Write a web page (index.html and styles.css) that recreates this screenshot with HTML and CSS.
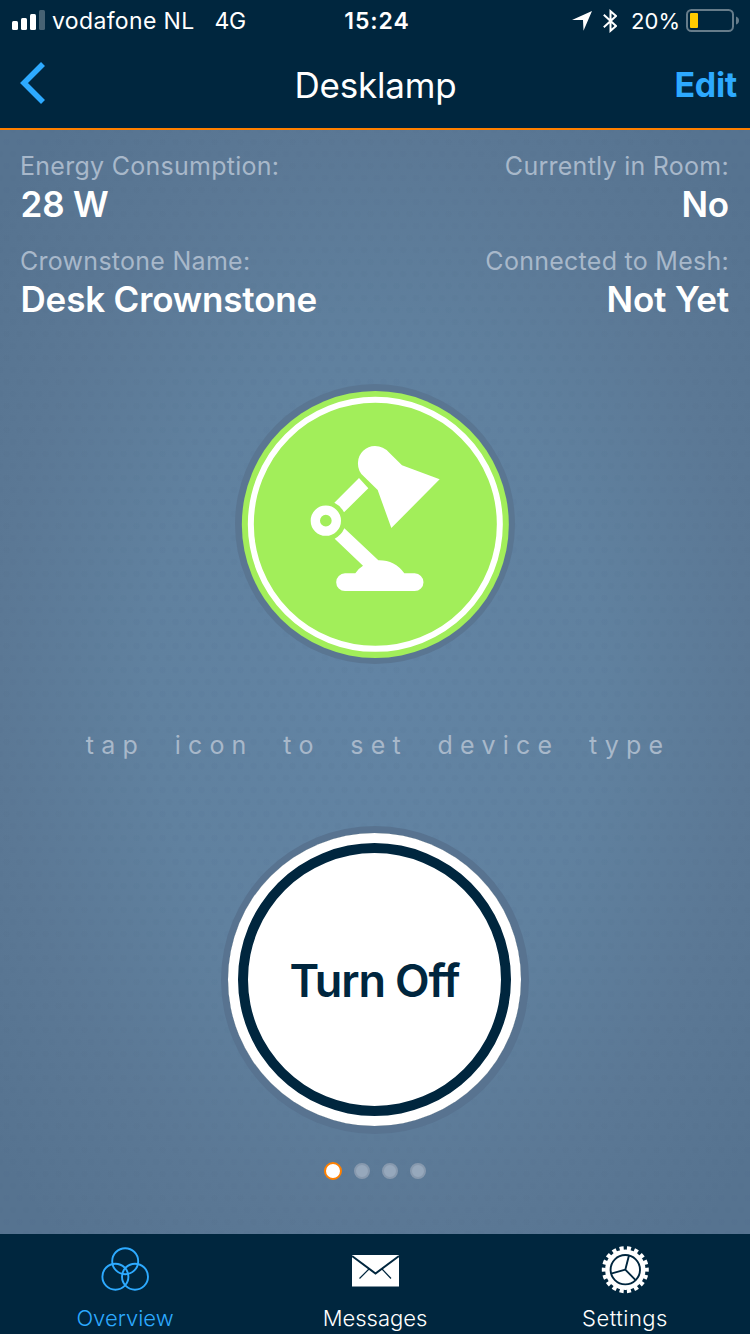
FILE: index.html
```html
<!DOCTYPE html>
<html lang="en">
<head>
<meta charset="utf-8">
<title>Desklamp</title>
<link rel="stylesheet" href="styles.css">
</head>
<body>
<div class="screen">
  <div class="status">
    <div class="status-left">
      <svg class="signal" width="34" height="22" viewBox="0 0 34 22"><g fill="#fff"><rect x="0" y="12" width="6" height="9" rx="1.5"/><rect x="9" y="9" width="6" height="12" rx="1.5"/><rect x="18" y="5" width="6" height="16" rx="1.5"/><rect x="27" y="1" width="6" height="20" rx="1.5" opacity=".28"/></g></svg>
      <span class="carrier">vodafone NL</span>
      <span class="network">4G</span>
    </div>
    <span class="clock">15:24</span>
    <div class="status-right">
      <svg class="location" width="20" height="20" viewBox="0 0 20 20"><path fill="#fff" d="M20 0 11.500 19.700 11 9H0Z"/></svg>
      <svg class="bluetooth" width="14" height="24" viewBox="0 0 14 24"><path fill="none" stroke="#fff" stroke-width="2" d="M.8 5.800 13 17 7.500 21.800V2.200L13 7 .8 18.200"/></svg>
      <span class="percent">20%</span>
      <svg class="battery" width="54" height="24" viewBox="0 0 54 24"><rect x="1" y="1" width="46" height="21" rx="4.500" fill="none" stroke="#667c8a" stroke-width="2"/><rect x="4" y="4" width="8" height="15" rx="1" fill="#fc0"/><path fill="#667c8a" d="M50 7.500q3 1 3 4t-3 4Z"/></svg>
    </div>
  </div>
  <header class="nav">
    <svg class="back" width="26" height="42" viewBox="0 0 26 42"><path fill="none" stroke="#2daaff" stroke-width="5.600" d="M23 2 4 21 23 40"/></svg>
    <h1 class="title">Desklamp</h1>
    <span class="edit">Edit</span>
  </header>
  <main class="content">
    <div class="info">
      <div class="item">
        <div class="label">Energy Consumption:</div>
        <div class="value">28 W</div>
      </div>
      <div class="item item-end">
        <div class="label">Currently in Room:</div>
        <div class="value">No</div>
      </div>
      <div class="item">
        <div class="label">Crownstone Name:</div>
        <div class="value">Desk Crownstone</div>
      </div>
      <div class="item item-end">
        <div class="label">Connected to Mesh:</div>
        <div class="value">Not Yet</div>
      </div>
    </div>
    <svg class="device" width="280" height="280" viewBox="15 27 840 840">
      <circle cx="435" cy="447" r="420" fill="#5a7692"/>
      <circle cx="436" cy="448.500" r="400.500" fill="#a2ee5a"/>
      <circle cx="436" cy="448" r="373.500" fill="none" stroke="#fff" stroke-width="18"/>
      <g fill="#fff">
        <path d="M478 233 516 271 629 313 484 459 443 345 401 304A52 52 0 0 1 384 262A51 51 0 0 1 435 213Q460 213 478 233Z"/>
        <path d="M387 309 415 340 342 412Q332 392 313 383Z"/>
        <path d="M343 460 445 556Q494 555 523 595H554A26.500 26.500 0 0 1 554 648H345A26.500 26.500 0 0 1 345 595H376Q384 581 399 572L314 491Q334 481 343 460Z"/>
      </g>
      <circle cx="287.500" cy="437" r="31.500" fill="none" stroke="#fff" stroke-width="28"/>
    </svg>
    <p class="hint">tap icon to set device type</p>
    <div class="switch-ring"><div class="switch"><span class="switch-text">Turn Off</span></div></div>
    <div class="pager"><i class="dot dot-active"></i><i class="dot"></i><i class="dot"></i><i class="dot"></i></div>
  </main>
  <nav class="tabs">
    <div class="tab tab-active">
      <svg width="50" height="50" viewBox="0 0 50 50"><g fill="none" stroke="#2daaff" stroke-width="1.900"><circle cx="25.200" cy="17.200" r="13"/><circle cx="15.400" cy="32.700" r="13"/><circle cx="35" cy="32.700" r="13"/></g></svg>
      <span class="tab-label label-overview">Overview</span>
    </div>
    <div class="tab">
      <svg width="50" height="50" viewBox="0 0 50 50"><path fill="#fff" d="M2 11h47v31.500H2Z"/><path fill="none" stroke="#00263e" stroke-width="2" d="M2 12 25.500 29.500 49 12"/><path fill="none" stroke="#00263e" stroke-width="1.200" d="M19 25 9.500 34.500M32 25 41 34.500"/></svg>
      <span class="tab-label label-messages">Messages</span>
    </div>
    <div class="tab">
      <svg width="50" height="50" viewBox="0 0 50 50"><circle cx="25.300" cy="25.700" r="20.200" fill="#fff"/><circle cx="25.300" cy="25.700" r="21.500" fill="none" stroke="#fff" stroke-width="4" pathLength="180" stroke-dasharray="5.500 4.500" stroke-dashoffset="2.750"/><g fill="none" stroke="#00263e" stroke-width="1.900"><circle cx="25.300" cy="25.700" r="14.700"/><path d="M25.300 25.700 28.900 11.700M25.300 25.700 11 29.700M25.300 25.700 35.600 36.200"/></g></svg>
      <span class="tab-label label-settings">Settings</span>
    </div>
  </nav>
</div>
</body>
</html>
```
FILE: styles.css
```css
* { box-sizing: border-box; }
body { margin: 0; font-family: Inter, "Liberation Sans", sans-serif; color: #fff; }
.screen { width: 750px; height: 1334px; display: flex; flex-direction: column; overflow: hidden; background: #00263e; white-space: nowrap; }
svg { display: block; flex: none; }

.status { height: 41px; padding: 1px 12px 0; display: grid; grid-template-columns: 1fr auto 1fr; align-items: center; line-height: 40px; font-size: 23px; }
.status-left, .status-right { display: flex; align-items: center; }
.status-right { justify-content: flex-end; margin-right: -12px; }
.signal { margin-top: -2px; }
.carrier { margin-left: 6px; letter-spacing: .35px; }
.network { margin-left: 20px; letter-spacing: -.3px; }
.clock { margin-left: 4px; font-weight: 600; letter-spacing: .9px; }
.location, .battery { margin-top: -1px; }
.bluetooth { margin: -1px 0 0 11px; }
.percent { margin: 0 6px 0 14px; font-size: 22px; }
.battery { margin-right: 10px; }

.nav { height: 89px; padding: 0 13px 0 20px; border-bottom: 2px solid #ff8000; display: grid; grid-template-columns: 1fr auto 1fr; align-items: center; }
.back { margin-top: -4px; }
.title { margin: 0 6px 0 0; font-size: 35px; line-height: 42px; font-weight: 400; letter-spacing: -.2px; }
.edit { justify-self: end; color: #2daaff; font-size: 34px; line-height: 42px; font-weight: 700; letter-spacing: -.3px; }

.content { flex: 1; display: flex; flex-direction: column; align-items: center;
  background: radial-gradient(circle, rgba(70,98,128,.06) 0 3px, transparent 3.700px) 0 0 / 13px 24px,
    radial-gradient(circle, rgba(70,98,128,.06) 0 3px, transparent 3.700px) 6.500px 12px / 13px 24px,
    radial-gradient(ellipse 500px 720px at 50% 50%, #6284a4 0%, #60819f 45%, #5b7895 75%, #567390 100%); }
.info { width: 100%; height: 254px; padding: 20px 21px 0; display: grid; grid-template-columns: auto auto; justify-content: space-between; grid-auto-rows: 95px; }
.item-end { text-align: right; }
.label { height: 33px; line-height: 33px; font-size: 25px; letter-spacing: .27px; margin-left: -1px; color: #a8b8ca; }
.value { height: 44px; line-height: 42px; font-size: 35px; font-weight: 600; letter-spacing: -.17px; margin-left: -.5px; }
.hint { margin: 61px 0 0; padding-left: 6px; height: 40px; line-height: 40px; font-size: 25px; letter-spacing: 7.200px; word-spacing: 15.500px; color: #a8b8ca; }
.switch-ring { margin-top: 61px; width: 308px; height: 308px; border-radius: 50%; background: #587390; padding: 7px; flex: none; }
.switch { width: 293px; height: 293px; border-radius: 50%; background: #fff; display: flex; align-items: center; justify-content: center; box-shadow: inset 0 0 0 10px #fff, inset 0 0 0 20px #00263e; }
.switch-text { margin-top: 2px; color: #00263e; font-size: 45px; font-weight: 600; letter-spacing: -1.100px; font-variant-ligatures: none; }
.pager { margin-top: 28px; height: 18px; display: flex; gap: 12px; align-items: center; }
.dot { width: 16px; height: 16px; border: 2px solid #8799ae; border-radius: 50%; background: #96a8bc; }
.dot-active { width: 18px; height: 18px; border-color: #ff8000; background: #fff; }

.tabs { height: 100px; display: grid; grid-template-columns: repeat(3, 1fr); }
.tab { display: flex; flex-direction: column; align-items: center; padding-top: 10px; }
.tab-label { margin-top: 9px; line-height: 30px; font-size: 22px; font-weight: 300; }
.label-settings { letter-spacing: .5px; }
.tab-active { color: #2daaff; }
```
